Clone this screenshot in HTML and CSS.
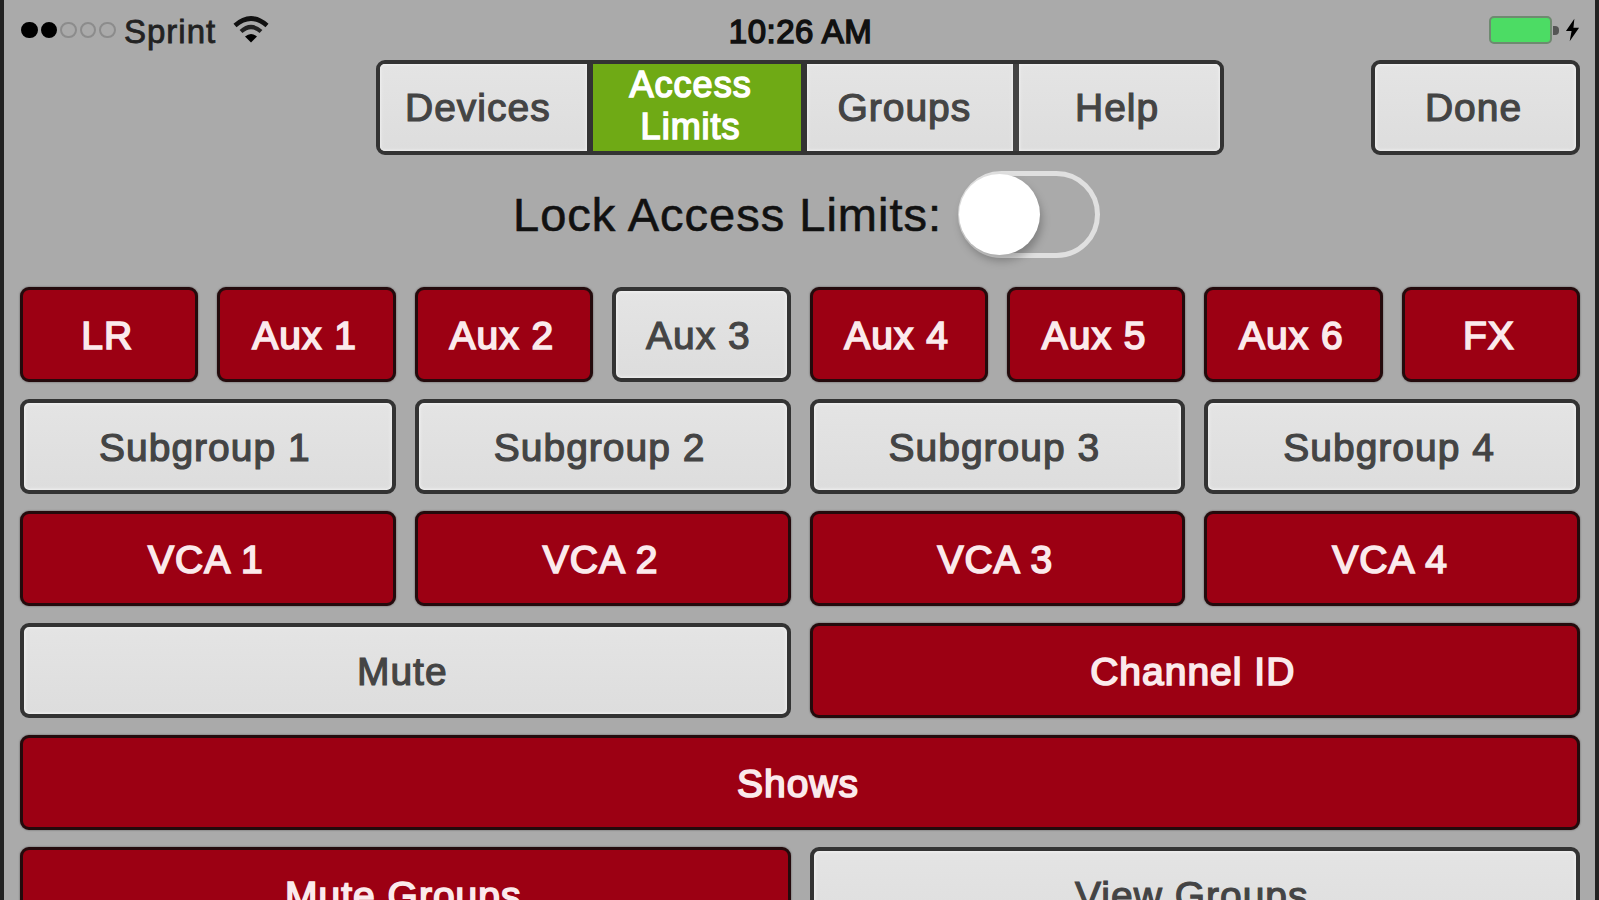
FILE: index.html
```
<!DOCTYPE html>
<html lang="en">
<head>
    <meta charset="UTF-8">
    <meta name="viewport" content="width=device-width, initial-scale=1.0">
    <title>Access Limits</title>
    <link rel="stylesheet" href="styles.css">
</head>
<body>
    <div class="screen">
        <!-- Status bar -->
        <div class="status-bar">
            <div class="carrier">
                <div class="signal">
                    <span class="dot full"></span>
                    <span class="dot full"></span>
                    <span class="dot"></span>
                    <span class="dot"></span>
                    <span class="dot"></span>
                </div>
                <span class="carrier-name">Sprint</span>
                <svg class="wifi" width="36" height="28" viewBox="0 0 36 28">
                    <path d="M2 9.5 Q18 -4.5 34 9.5" fill="none" stroke="#111" stroke-width="4.6"/>
                    <path d="M8 15.5 Q18 6.5 28 15.5" fill="none" stroke="#222" stroke-width="4.2"/>
                    <path d="M12 20.5 Q18 15.5 24 20.5 L18 26.5 Z" fill="#000"/>
                </svg>
            </div>
            <div class="time">10:26 AM</div>
            <div class="power">
                <span class="battery"></span>
                <span class="battery-tip"></span>
                <svg class="bolt" width="15" height="24" viewBox="0 0 16 24">
                    <path d="M10 0 L1 13 H7 L5 24 L15 9.5 H9 Z" fill="#000"/>
                </svg>
            </div>
        </div>

        <!-- Tabs -->
        <div class="toolbar">
            <div class="tabs">
                <button class="tab">Devices</button>
                <button class="tab active">Access<br>Limits</button>
                <button class="tab">Groups</button>
                <button class="tab">Help</button>
            </div>
            <button class="btn done">Done</button>
        </div>

        <div class="lock-row">
            <span class="lock-label">Lock Access Limits:</span>
            <div class="switch"><span class="knob"></span></div>
        </div>

        <!-- Access buttons -->
        <div class="grid">
            <button class="btn red">LR</button>
            <button class="btn red">Aux 1</button>
            <button class="btn red">Aux 2</button>
            <button class="btn">Aux 3</button>
            <button class="btn red">Aux 4</button>
            <button class="btn red">Aux 5</button>
            <button class="btn red">Aux 6</button>
            <button class="btn red">FX</button>

            <button class="btn span-2">Subgroup 1</button>
            <button class="btn span-2">Subgroup 2</button>
            <button class="btn span-2">Subgroup 3</button>
            <button class="btn span-2">Subgroup 4</button>

            <button class="btn red span-2">VCA 1</button>
            <button class="btn red span-2">VCA 2</button>
            <button class="btn red span-2">VCA 3</button>
            <button class="btn red span-2">VCA 4</button>

            <button class="btn span-4">Mute</button>
            <button class="btn red span-4">Channel ID</button>

            <button class="btn red span-8">Shows</button>

            <button class="btn red span-4">Mute Groups</button>
            <button class="btn span-4">View Groups</button>
        </div>
    </div>
</body>
</html>
```
FILE: styles.css
```
* {
    margin: 0;
    padding: 0;
    box-sizing: border-box;
}

body {
    font-family: "Liberation Sans", Arial, sans-serif;
    background: #aaaaaa;
    overflow: hidden;
}

.screen {
    height: 900px;
    border-left: 4px solid #222;
    border-right: 4px solid #222;
    background: #aaaaaa;
    padding: 0 15px 0 17px;
    overflow: hidden;
}

/* Status bar */
.status-bar {
    display: grid;
    grid-template-columns: 1fr auto 1fr;
    align-items: center;
    height: 60px;
    color: #222;
}

.carrier {
    display: flex;
    align-items: center;
}

.signal {
    display: flex;
    gap: 3px;
}

.dot {
    width: 16.6px;
    height: 16.6px;
    border: 2px solid #8c8c8c;
    border-radius: 50%;
}

.dot.full {
    background: #000;
    border-color: #000;
}

.carrier-name {
    font-size: 33px;
    letter-spacing: 1px;
    margin-left: 8px;
    padding-top: 4px;
    -webkit-text-stroke: 0.8px #222;
}

.wifi {
    margin-left: 17px;
}

.time {
    font-size: 33px;
    letter-spacing: 0.5px;
    color: #111;
    padding-top: 4px;
    -webkit-text-stroke: 1.5px #111;
}

.power {
    display: flex;
    align-items: center;
    justify-content: flex-end;
}

.battery {
    width: 63px;
    height: 28px;
    background: #4cdc64;
    border: 2px solid #6e8a70;
    border-radius: 5px;
}

.battery-tip {
    width: 6px;
    height: 9px;
    background: #555;
    border-radius: 0 4px 4px 0;
    margin-left: 1px;
}

.bolt {
    margin-left: 6px;
}

/* Buttons */
.btn,
.tab {
    font-family: inherit;
    font-size: 39px;
    letter-spacing: 1px;
    line-height: 42px;
    color: #444;
    background: linear-gradient(#e4e4e4, #dddddd);
    border: 4px solid #333;
    padding: 2px 6px 0 0;
    -webkit-text-stroke: 1.2px #444;
    white-space: nowrap;
}

.btn {
    height: 95px;
    border-radius: 9px;
    box-shadow: inset 0 0 3px 1px #f2f2f2;
}

.btn.red {
    color: #fbeaec;
    background: #9c0013;
    border: 3px solid #240a0c;
    padding-right: 4px;
    box-shadow: 0 0 2px #555;
    -webkit-text-stroke: 1.7px #fbeaec;
}

.toolbar {
    display: flex;
    justify-content: space-between;
}

.tabs {
    display: flex;
    width: 848px;
    height: 95px;
    margin-left: 355px;
    border: 4px solid #333;
    border-radius: 9px;
    overflow: hidden;
}

.tab {
    flex: 1 1 0;
    border: none;
    padding: 0 11px 0 0;
    box-shadow: inset 0 0 3px 1px #f0f0f0;
}

.tab + .tab {
    border-left: 6px solid #444;
}

.tab:last-child {
    padding-right: 5px;
}

.tab.active {
    color: #fff;
    font-size: 36px;
    padding: 0 12px 4px 0;
    background: #6faa15;
    box-shadow: none;
    -webkit-text-stroke: 1.6px #fff;
}

.tab.active,
.tab.active + .tab {
    border-left-color: #333;
}

.btn.done {
    width: 209px;
    padding: 0 4px 0 0;
}

/* Lock switch */
.lock-row {
    display: flex;
    align-items: center;
    height: 132px;
    padding: 0 0 14px 492px;
}

.lock-label {
    font-size: 47px;
    letter-spacing: 1px;
    color: #111;
    -webkit-text-stroke: 0.6px #111;
}

.switch {
    width: 142px;
    height: 87px;
    margin-left: 16px;
    border: 5px solid #e0e0e0;
    border-radius: 44px;
}

.knob {
    display: block;
    width: 81px;
    height: 81px;
    margin: -2px 0 0 -4px;
    background: #fff;
    border-radius: 50%;
    box-shadow: 2px 6px 9px rgba(0, 0, 0, 0.25);
}

/* Access grid */
.grid {
    display: grid;
    grid-template-columns: repeat(8, 1fr);
    gap: 17px 19px;
    margin-left: -1px;
}

.span-2 {
    grid-column: span 2;
}

.span-4 {
    grid-column: span 4;
}

.span-8 {
    grid-column: span 8;
}
```
